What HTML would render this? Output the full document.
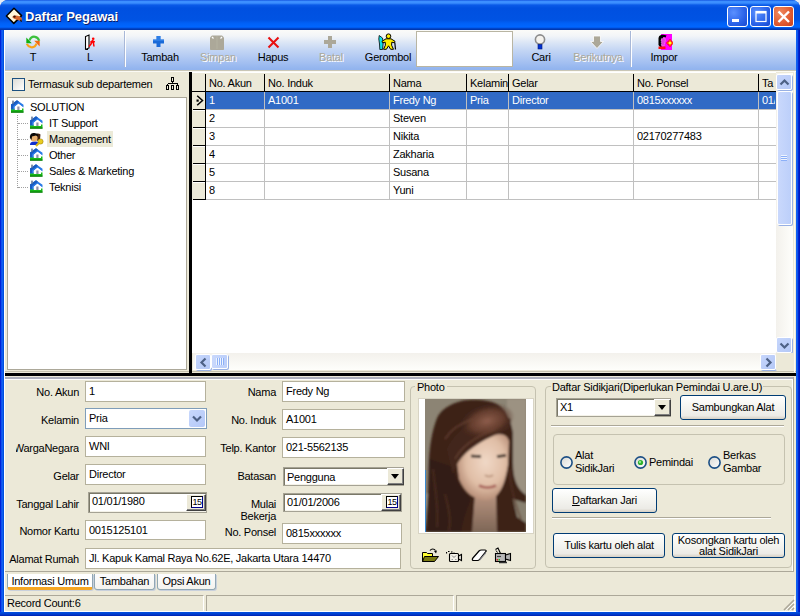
<!DOCTYPE html>
<html><head><meta charset="utf-8">
<style>
*{box-sizing:border-box}
html,body{margin:0;padding:0}
body{width:800px;height:616px;position:relative;overflow:hidden;background:#e6ecf6;font-family:"Liberation Sans",sans-serif;font-size:11px;letter-spacing:-0.25px;color:#000}
.a{position:absolute}
#frame{left:0;top:0;width:800px;height:616px;background:linear-gradient(90deg,#0018d0 0,#0030e0 1px,#2070ff 2px,#0050e0 3px,#0050e0 4px,#0050e0 796px,#2070ff 797px,#0038e0 798px,#0018c0 799px);border-radius:8px 8px 0 0}
#title{left:0;top:0;width:800px;height:30px;border-radius:8px 8px 0 0;background:linear-gradient(180deg,#0a46d8 0,#3c8fff 1px,#3c8fff 3px,#0a5ae8 5px,#0050e0 8px,#0053e3 20px,#0060f6 23px,#0066ff 27px,#0052e2 28px,#0038b0 29px,#0038b0 30px)}
#client{left:4px;top:30px;width:792px;height:582px;background:#ece9d8}
.ttl{left:25px;top:9px;color:#fff;font-weight:bold;font-size:13px;letter-spacing:0;text-shadow:1px 1px 0 #0a1e6a}
.wbtn{top:6px;width:21px;height:21px;border:1px solid #fff;border-radius:3px;background:radial-gradient(circle at 30% 30%,#5a90ff,#2a62e8 60%,#1848d0)}
.wbtn.x{background:radial-gradient(circle at 30% 30%,#f08a60,#e05a30 60%,#c8401c)}

.sep{top:31px;width:2px;height:36px;border-left:1px solid #a8b8d8;border-right:1px solid #fff}
.tb{top:51px;height:13px;text-align:center;font-size:11px;line-height:13px;white-space:nowrap}
.tb.dis{color:#aca899;text-shadow:1px 1px 0 #fff}

.tr{line-height:14px;white-space:nowrap}

.gh{line-height:14px;white-space:nowrap;overflow:hidden}
.gc{line-height:14px;white-space:nowrap}
.gc.sel{color:#fff}

.sbb{width:16px;height:16px;border:1px solid #fff;border-radius:2px;background:linear-gradient(135deg,#c6d6fc,#b4c8f6);box-shadow:1px 1px 0 #98b0e4}
.sbb svg{position:absolute;left:0;top:0}
.sbt{border:1px solid #fff;border-radius:2px;background:linear-gradient(90deg,#c9d8fc,#bccffa);box-shadow:1px 1px 0 #98b0e4}

.lbl{text-align:right;white-space:nowrap;line-height:13px}
.ed{background:#fff;border:1px solid #b5b19c;padding:0 0 0 3px;line-height:18px;white-space:nowrap;overflow:hidden}
.cbx{background:#fff;border:1px solid #7f9db9;padding:0 0 0 3px;line-height:18px}
.cbb{width:16px;height:17px;border-radius:2px;background:linear-gradient(135deg,#c8d8fc,#b4c8f8)}
.cbb svg{position:absolute;left:0;top:0}
.dt{background:#fff;border:1px solid #a5a294;box-shadow:inset 1px 1px 0 #7a7868,inset -1px -1px 0 #f4f2e8;padding:0 0 0 3px;line-height:17px;white-space:nowrap}
.dtb{background:#ece9d8;border-style:solid;border-width:1px;border-color:#fff #404040 #404040 #fff;box-shadow:inset -1px -1px 0 #808080}
.dtb span{position:absolute;left:4px;top:1px;width:12px;height:12px;font-size:9px;line-height:10px;letter-spacing:-0.4px;text-align:center;background:#fff;border-top:1px solid #000;border-left:1px solid #000;border-right:1px solid #00008a;border-bottom:1px solid #00008a;color:#000}
.tab{height:16px;line-height:14px;text-align:center;border:1px solid #91a7b4;border-top:none;border-radius:0 0 3px 3px;background:linear-gradient(180deg,#fcfcfe,#f4f3ee);white-space:nowrap;box-shadow:1px 1px 0 #c8d0dc}
.tab.sel{border-bottom:3px solid #f5a623;height:16px;background:#fff}
.sp{top:595px;height:16px;border-top:1px solid #aca899;border-left:1px solid #aca899;border-right:1px solid #fff}

.grp{border:1px solid #c5c2b0;border-radius:4px}
.hr{height:2px;border-top:1px solid #aca899;border-bottom:1px solid #fff}
.btn{border:1px solid #003c74;border-radius:3px;background:linear-gradient(180deg,#fff 0,#f6f6f2 40%,#ecebe6 85%,#d6d0c5 100%);text-align:center;line-height:23px;white-space:nowrap}
.rad{width:13px;height:13px;border-radius:50%;border:1.6px solid #1c4f85;background:linear-gradient(135deg,#dcdcd7,#fff)}
.rad.on::after{content:"";position:absolute;left:3px;top:3px;width:5px;height:5px;border-radius:50%;background:radial-gradient(circle at 40% 40%,#8be07a,#21a121)}
</style></head><body>
<div class="a" id="frame"></div>
<div class="a" id="title"></div>
<div class="a ttl">Daftar Pegawai</div>
<div class="a wbtn" style="left:727px"></div>
<div class="a wbtn" style="left:750px"></div>
<div class="a wbtn x" style="left:773px"></div>
<div class="a" id="client"></div>

<!-- TOOLBAR -->
<div class="a" style="left:4px;top:30px;width:792px;height:40px;background:linear-gradient(180deg,#fbfbf8 0,#f2f5f8 6px,#dde7f6 12px,#c4d6f4 20px,#aac4f2 30px,#92b4ee 39px)"></div>
<div class="a" style="left:4px;top:70px;width:792px;height:1px;background:#c9c6b6"></div>
<div class="a" style="left:4px;top:71px;width:792px;height:1px;background:#fbfaf4"></div>
<div class="a sep" style="left:124px"></div>
<div class="a sep" style="left:630px"></div>
<div class="a tb" style="left:20px;width:26px">T</div>
<div class="a tb" style="left:77px;width:26px">L</div>
<div class="a tb" style="left:139px;width:42px">Tambah</div>
<div class="a tb dis" style="left:197px;width:42px">Simpan</div>
<div class="a tb" style="left:252px;width:42px">Hapus</div>
<div class="a tb dis" style="left:310px;width:42px">Batal</div>
<div class="a tb" style="left:360px;width:56px">Gerombol</div>
<div class="a" style="left:416px;top:31px;width:97px;height:36px;background:#fff;border:1px solid #b9b5a2"></div>
<div class="a tb" style="left:525px;width:32px">Cari</div>
<div class="a tb dis" style="left:568px;width:60px">Berikutnya</div>
<div class="a tb" style="left:645px;width:38px">Impor</div>

<!-- LEFT PANEL -->
<div class="a" style="left:12px;top:78px;width:13px;height:13px;border:1px solid #1c5180;background:linear-gradient(135deg,#dcdcd7,#fff)"></div>
<div class="a" style="left:28px;top:78px;line-height:13px">Termasuk sub departemen</div>
<svg class="a" style="left:165px;top:76px" width="16" height="16" viewBox="0 0 16 16" shape-rendering="crispEdges"><g fill="none" stroke="#000" stroke-width="1"><rect x="6.5" y="1.5" width="2" height="4"/><path d="M7.5 5.5V7.5M2.5 7.5H12.5M2.5 7.5V9.5M12.5 7.5V9.5"/><rect x="1.5" y="9.5" width="2" height="4"/><rect x="6.5" y="9.5" width="2" height="4"/><rect x="11.5" y="9.5" width="2" height="4"/></g></svg>
<div class="a" style="left:7px;top:97px;width:180px;height:273px;background:#fff;border:1px solid #aca899"></div>
<div class="a" style="left:17px;top:115px;width:1px;height:73px;border-left:1px dotted #a0a0a0"></div>
<div class="a" style="left:18px;top:123px;width:10px;height:1px;border-top:1px dotted #a0a0a0"></div>
<div class="a" style="left:18px;top:139px;width:10px;height:1px;border-top:1px dotted #a0a0a0"></div>
<div class="a" style="left:18px;top:155px;width:10px;height:1px;border-top:1px dotted #a0a0a0"></div>
<div class="a" style="left:18px;top:171px;width:10px;height:1px;border-top:1px dotted #a0a0a0"></div>
<div class="a" style="left:18px;top:187px;width:10px;height:1px;border-top:1px dotted #a0a0a0"></div>
<div class="a" style="left:47px;top:131px;width:66px;height:16px;background:#ecead8"></div>
<div class="a tr" style="left:30px;top:100px">SOLUTION</div>
<div class="a tr" style="left:49px;top:116px">IT Support</div>
<div class="a tr" style="left:49px;top:132px">Management</div>
<div class="a tr" style="left:49px;top:148px">Other</div>
<div class="a tr" style="left:49px;top:164px">Sales &amp; Marketing</div>
<div class="a tr" style="left:49px;top:180px">Teknisi</div>

<!-- GRID -->
<div class="a" style="left:189px;top:72px;width:3px;height:301px;background:#000"></div>
<div class="a" style="left:192px;top:72px;width:584px;height:281px;background:#fff"></div>
<div class="a" style="left:192px;top:72px;width:584px;height:19px;background:#ece9d8;border-top:1px solid #fff"></div>
<div class="a" style="left:192px;top:91px;width:584px;height:1px;background:#000"></div>
<div class="a" style="left:192px;top:92px;width:13px;height:108px;background:#ece9d8"></div>
<div class="a" style="left:205px;top:74px;width:1px;height:126px;background:#000"></div>
<div class="a" style="left:206px;top:92px;width:570px;height:17px;background:#316ac5"></div>
<div class="a" style="left:206px;top:109px;width:570px;height:1px;background:#c0c0c0"></div>
<div class="a" style="left:193px;top:109px;width:13px;height:1px;background:#000"></div>
<div class="a" style="left:193px;top:110px;width:12px;height:1px;background:#fff"></div>
<div class="a" style="left:206px;top:127px;width:570px;height:1px;background:#c0c0c0"></div>
<div class="a" style="left:193px;top:127px;width:13px;height:1px;background:#000"></div>
<div class="a" style="left:193px;top:128px;width:12px;height:1px;background:#fff"></div>
<div class="a" style="left:206px;top:145px;width:570px;height:1px;background:#c0c0c0"></div>
<div class="a" style="left:193px;top:145px;width:13px;height:1px;background:#000"></div>
<div class="a" style="left:193px;top:146px;width:12px;height:1px;background:#fff"></div>
<div class="a" style="left:206px;top:163px;width:570px;height:1px;background:#c0c0c0"></div>
<div class="a" style="left:193px;top:163px;width:13px;height:1px;background:#000"></div>
<div class="a" style="left:193px;top:164px;width:12px;height:1px;background:#fff"></div>
<div class="a" style="left:206px;top:181px;width:570px;height:1px;background:#c0c0c0"></div>
<div class="a" style="left:193px;top:181px;width:13px;height:1px;background:#000"></div>
<div class="a" style="left:193px;top:182px;width:12px;height:1px;background:#fff"></div>
<div class="a" style="left:206px;top:199px;width:570px;height:1px;background:#c0c0c0"></div>
<div class="a" style="left:193px;top:199px;width:13px;height:1px;background:#000"></div>
<div class="a" style="left:193px;top:200px;width:12px;height:1px;background:#fff"></div>
<div class="a" style="left:264px;top:92px;width:1px;height:108px;background:#c0c0c0"></div>
<div class="a" style="left:264px;top:74px;width:1px;height:17px;background:#000"></div>
<div class="a" style="left:389px;top:92px;width:1px;height:108px;background:#c0c0c0"></div>
<div class="a" style="left:389px;top:74px;width:1px;height:17px;background:#000"></div>
<div class="a" style="left:466px;top:92px;width:1px;height:108px;background:#c0c0c0"></div>
<div class="a" style="left:466px;top:74px;width:1px;height:17px;background:#000"></div>
<div class="a" style="left:508px;top:92px;width:1px;height:108px;background:#c0c0c0"></div>
<div class="a" style="left:508px;top:74px;width:1px;height:17px;background:#000"></div>
<div class="a" style="left:633px;top:92px;width:1px;height:108px;background:#c0c0c0"></div>
<div class="a" style="left:633px;top:74px;width:1px;height:17px;background:#000"></div>
<div class="a" style="left:758px;top:92px;width:1px;height:108px;background:#c0c0c0"></div>
<div class="a" style="left:758px;top:74px;width:1px;height:17px;background:#000"></div>
<div class="a gh" style="left:209px;top:76px;width:55px;overflow:hidden">No. Akun</div>
<div class="a gh" style="left:268px;top:76px;width:121px;overflow:hidden">No. Induk</div>
<div class="a gh" style="left:393px;top:76px;width:73px;overflow:hidden">Nama</div>
<div class="a gh" style="left:470px;top:76px;width:38px;overflow:hidden">Kelamin</div>
<div class="a gh" style="left:512px;top:76px;width:121px;overflow:hidden">Gelar</div>
<div class="a gh" style="left:637px;top:76px;width:121px;overflow:hidden">No. Ponsel</div>
<div class="a gh" style="left:762px;top:76px;width:13px;overflow:hidden">Ta</div>
<div class="a gc sel" style="left:209px;top:93px;width:55px;overflow:hidden">1</div>
<div class="a gc sel" style="left:268px;top:93px;width:121px;overflow:hidden">A1001</div>
<div class="a gc sel" style="left:393px;top:93px;width:73px;overflow:hidden">Fredy Ng</div>
<div class="a gc sel" style="left:470px;top:93px;width:38px;overflow:hidden">Pria</div>
<div class="a gc sel" style="left:512px;top:93px;width:121px;overflow:hidden">Director</div>
<div class="a gc sel" style="left:637px;top:93px;width:121px;overflow:hidden">0815xxxxxx</div>
<div class="a gc sel" style="left:762px;top:93px;width:13px;overflow:hidden">01/</div>
<div class="a gc" style="left:209px;top:111px;width:55px;overflow:hidden">2</div>
<div class="a gc" style="left:393px;top:111px;width:73px;overflow:hidden">Steven</div>
<div class="a gc" style="left:209px;top:129px;width:55px;overflow:hidden">3</div>
<div class="a gc" style="left:393px;top:129px;width:73px;overflow:hidden">Nikita</div>
<div class="a gc" style="left:637px;top:129px;width:121px;overflow:hidden">02170277483</div>
<div class="a gc" style="left:209px;top:147px;width:55px;overflow:hidden">4</div>
<div class="a gc" style="left:393px;top:147px;width:73px;overflow:hidden">Zakharia</div>
<div class="a gc" style="left:209px;top:165px;width:55px;overflow:hidden">5</div>
<div class="a gc" style="left:393px;top:165px;width:73px;overflow:hidden">Susana</div>
<div class="a gc" style="left:209px;top:183px;width:55px;overflow:hidden">8</div>
<div class="a gc" style="left:393px;top:183px;width:73px;overflow:hidden">Yuni</div>
<svg class="a" style="left:196px;top:95px" width="8" height="11" viewBox="0 0 8 11"><path d="M1.2 0.8L6.5 5.5L1.2 10.2" fill="none" stroke="#000" stroke-width="1.5"/><rect x="0.5" y="4.5" width="2.2" height="2.2" fill="#000"/></svg>

<!-- SCROLLBARS -->
<div class="a" style="left:776px;top:73px;width:17px;height:280px;background:linear-gradient(90deg,#f3f1ec,#fefefb)"></div>
<div class="a sbb" style="left:776px;top:74px"><svg width="15" height="15" viewBox="0 0 15 15"><path d="M3.5 9.5L7.5 5.5L11.5 9.5" fill="none" stroke="#4d6185" stroke-width="2.2"/></svg></div>
<div class="a sbt" style="left:777px;top:91px;width:15px;height:134px"></div>
<div class="a" style="left:781px;top:155px;width:6px;height:1px;background:#eef4fe;box-shadow:0 1px 0 #8cb0f8"></div>
<div class="a" style="left:781px;top:157px;width:6px;height:1px;background:#eef4fe;box-shadow:0 1px 0 #8cb0f8"></div>
<div class="a" style="left:781px;top:159px;width:6px;height:1px;background:#eef4fe;box-shadow:0 1px 0 #8cb0f8"></div>
<div class="a sbb" style="left:776px;top:337px"><svg width="15" height="15" viewBox="0 0 15 15"><path d="M3.5 5.5L7.5 9.5L11.5 5.5" fill="none" stroke="#4d6185" stroke-width="2.2"/></svg></div>
<div class="a" style="left:193px;top:353px;width:583px;height:17px;background:linear-gradient(180deg,#f3f1ec,#fefefb)"></div>
<div class="a sbb" style="left:195px;top:354px"><svg width="15" height="15" viewBox="0 0 15 15"><path d="M9.5 3.5L5.5 7.5L9.5 11.5" fill="none" stroke="#4d6185" stroke-width="2.2"/></svg></div>
<div class="a sbt" style="left:211px;top:354px;width:17px;height:15px"></div>
<div class="a" style="left:216px;top:358px;width:1px;height:7px;background:#eef4fe;box-shadow:1px 0 0 #8cb0f8"></div>
<div class="a" style="left:218px;top:358px;width:1px;height:7px;background:#eef4fe;box-shadow:1px 0 0 #8cb0f8"></div>
<div class="a" style="left:220px;top:358px;width:1px;height:7px;background:#eef4fe;box-shadow:1px 0 0 #8cb0f8"></div>
<div class="a" style="left:222px;top:358px;width:1px;height:7px;background:#eef4fe;box-shadow:1px 0 0 #8cb0f8"></div>
<div class="a sbb" style="left:760px;top:354px"><svg width="15" height="15" viewBox="0 0 15 15"><path d="M5.5 3.5L9.5 7.5L5.5 11.5" fill="none" stroke="#4d6185" stroke-width="2.2"/></svg></div>
<div class="a" style="left:776px;top:353px;width:17px;height:17px;background:#ece9d8"></div>
<div class="a" style="left:4px;top:371px;width:185px;height:1px;background:#c4c0ac"></div>
<div class="a" style="left:192px;top:371px;width:604px;height:1px;background:#c4c0ac"></div>
<div class="a" style="left:4px;top:373px;width:792px;height:3px;background:#000"></div>
<div class="a" style="left:4px;top:377px;width:790px;height:2px;background:#aeb0bc"></div>
<div class="a" style="left:4px;top:379px;width:789px;height:1px;background:#fff"></div>
<div class="a" style="left:4px;top:379px;width:1px;height:192px;background:#fff"></div>
<div class="a" style="left:4px;top:571px;width:790px;height:1px;background:#aca899"></div>


<!-- FORM LEFT -->
<div class="a lbl" style="left:4px;width:75px;top:386px">No. Akun</div>
<div class="a lbl" style="left:4px;width:75px;top:414px">Kelamin</div>
<div class="a" style="left:16px;width:63px;top:442px;overflow:hidden;height:14px"><div class="a lbl" style="right:0;top:0">WargaNegara</div></div>
<div class="a lbl" style="left:4px;width:75px;top:470px">Gelar</div>
<div class="a lbl" style="left:4px;width:75px;top:498px">Tanggal Lahir</div>
<div class="a lbl" style="left:4px;width:75px;top:525px">Nomor Kartu</div>
<div class="a lbl" style="left:4px;width:75px;top:553px">Alamat Rumah</div>
<div class="a ed" style="left:85px;top:381px;width:121px;height:21px">1</div>
<div class="a cbx" style="left:85px;top:408px;width:122px;height:21px">Pria</div>
<div class="a cbb" style="left:189px;top:410px"><svg width="16" height="17" viewBox="0 0 16 17"><path d="M4 6.5L8 10.5L12 6.5" fill="none" stroke="#4d6185" stroke-width="2.2"/></svg></div>
<div class="a ed" style="left:85px;top:436px;width:121px;height:21px">WNI</div>
<div class="a ed" style="left:85px;top:464px;width:121px;height:21px">Director</div>
<div class="a dt" style="left:88px;top:492px;width:119px;height:21px">01/01/1980</div>
<div class="a dtb" style="left:186px;top:494px;width:20px;height:17px"><span>15</span></div>
<div class="a ed" style="left:85px;top:520px;width:121px;height:20px">0015125101</div>
<div class="a ed" style="left:85px;top:548px;width:316px;height:21px">Jl. Kapuk Kamal Raya No.62E, Jakarta Utara 14470</div>

<!-- FORM RIGHT -->
<div class="a lbl" style="left:200px;width:76px;top:386px">Nama</div>
<div class="a lbl" style="left:200px;width:76px;top:414px">No. Induk</div>
<div class="a lbl" style="left:200px;width:76px;top:442px">Telp. Kantor</div>
<div class="a lbl" style="left:200px;width:76px;top:470px">Batasan</div>
<div class="a lbl" style="left:200px;width:76px;top:498px">Mulai</div>
<div class="a lbl" style="left:200px;width:76px;top:510px">Bekerja</div>
<div class="a lbl" style="left:200px;width:76px;top:526px">No. Ponsel</div>
<div class="a ed" style="left:282px;top:381px;width:123px;height:21px">Fredy Ng</div>
<div class="a ed" style="left:282px;top:409px;width:123px;height:21px">A1001</div>
<div class="a ed" style="left:282px;top:437px;width:123px;height:21px">021-5562135</div>
<div class="a dt" style="left:283px;top:467px;width:121px;height:19px;line-height:18px">Pengguna</div>
<div class="a dtb" style="left:387px;top:468px;width:17px;height:17px"><svg style="position:absolute;left:3px;top:5px" width="9" height="6" viewBox="0 0 9 6"><path d="M0 0H8L4 5z" fill="#000"/></svg></div>
<div class="a dt" style="left:283px;top:493px;width:119px;height:19px;line-height:17px">01/01/2006</div>
<div class="a dtb" style="left:381px;top:494px;width:20px;height:17px"><span>15</span></div>
<div class="a ed" style="left:282px;top:523px;width:120px;height:21px">0815xxxxxx</div>

<!-- TABS -->
<div class="a tab sel" style="left:7px;top:574px;width:86px">Informasi Umum</div>
<div class="a tab" style="left:94px;top:574px;width:61px">Tambahan</div>
<div class="a tab" style="left:157px;top:574px;width:59px">Opsi Akun</div>

<!-- STATUS -->
<div class="a sp" style="left:4px;width:200px"></div>
<div class="a sp" style="left:206px;width:248px"></div>
<div class="a sp" style="left:456px;width:339px"></div>
<div class="a" style="left:7px;top:597px;line-height:13px">Record Count:6</div>
<div class="a" style="left:4px;top:611px;width:792px;height:1px;background:#fff"></div>


<!-- PHOTO GROUP -->
<div class="a grp" style="left:410px;top:386px;width:126px;height:183px"></div>
<div class="a" style="left:415px;top:381px;padding:0 2px;background:#ece9d8;line-height:13px">Photo</div>
<div class="a" style="left:418px;top:398px;width:116px;height:136px;background:#fff;border:1px solid #d8d4c4"></div>
<svg class="a" style="left:425px;top:399px" width="101" height="133" viewBox="0 0 101 133">
<defs>
<radialGradient id="face" cx="0.55" cy="0.42" r="0.62"><stop offset="0" stop-color="#f0d8c6"/><stop offset="0.6" stop-color="#e0bea6"/><stop offset="1" stop-color="#b08670"/></radialGradient>
<radialGradient id="hl" cx="0.5" cy="0.5" r="0.5"><stop offset="0" stop-color="#8e5e4c"/><stop offset="0.6" stop-color="#6a4030" stop-opacity="0.85"/><stop offset="1" stop-color="#48281e" stop-opacity="0"/></radialGradient>
<linearGradient id="neck" x1="0" y1="0" x2="0" y2="1"><stop offset="0" stop-color="#b89480"/><stop offset="1" stop-color="#7e6656"/></linearGradient>
<filter id="bl" x="-10%" y="-10%" width="120%" height="120%"><feGaussianBlur stdDeviation="1.1"/></filter>
</defs>
<rect width="101" height="133" fill="#8c8474"/>
<g filter="url(#bl)">
<rect x="82" y="0" width="19" height="100" fill="#9c9282"/>
<rect x="0" y="95" width="8" height="38" fill="#a49e90"/>

<path d="M0 133L3 92L4 60C5 45 7 32 12 19C16 11 24 5 38 1.6C48 0 62 0 72 5C80 10 86 20 88 34L88 64C88 80 92 90 101 96V133Z" fill="#3c2319"/>
<path d="M4 60C5 85 6 110 3 133H36C38 120 42 110 46 100C36 92 30 80 28 68Z" fill="#311c14"/>
<path d="M88 100L101 104V124L92 118Z" fill="#888070"/>
<path d="M50 95L71 95L72 133H47Z" fill="url(#neck)"/>
<path d="M32 64C33 48 45 40 60 37C74 34 82 34 84 42L83 66C80 85 75 98 64 101C52 103 40 95 34 80Z" fill="url(#face)"/>
<path d="M28 76C32 58 48 44 84 30L86 20C66 12 36 22 22 50Z" fill="#43271c"/>
<ellipse cx="62" cy="22" rx="28" ry="17" transform="rotate(-15 62 22)" fill="url(#hl)"/>
<path d="M20 40C26 30 36 24 48 20M30 60C36 48 50 38 70 30" stroke="#6e4636" stroke-width="1.5" fill="none" opacity="0.7"/>
<path d="M8 70C10 90 14 110 12 128M20 95C24 110 26 120 24 132M84 70C86 90 90 105 96 120" stroke="#5a3628" stroke-width="1.5" fill="none" opacity="0.7"/>
<path d="M46 57L56 57.5M72 57.5L81 56.5" stroke="#1e120c" stroke-width="2.4"/>
<path d="M60 76C62 78 66 78 68 76" stroke="#b08870" stroke-width="1.5" fill="none"/>
<path d="M54 86.5C59 89 66 89 71 86.5" stroke="#a8625a" stroke-width="2.6" fill="none"/>
</g>
</svg>
<div class="a" style="left:425px;top:470px;width:1px;height:62px;background:#3a8ad0"></div>
<svg class="a" style="left:420px;top:547px" width="20" height="16" viewBox="0 0 20 16">
<path d="M2.5 5.5H6.5L7.5 6.5H12.5V14.5H2.5Z" fill="#ffff30" stroke="#000" stroke-width="1"/>
<path d="M4.5 9.5H18.5L14.5 14.5H2.5Z" fill="#7a7a10" stroke="#000" stroke-width="1" stroke-linejoin="round"/>
<path d="M10 3.5C11.5 1.5 14 1.5 15.5 3.5" fill="none" stroke="#000" stroke-width="1.2"/>
<path d="M14 4L17 3.5L16 6.5Z" fill="#000"/>
</svg>
<svg class="a" style="left:446px;top:550px" width="17" height="13" viewBox="0 0 17 13">
<path d="M0.5 2V3.5M2 1.5H3.5M5 2H6.5M7.5 3H8.5" stroke="#000" stroke-width="1.2"/>
<rect x="3.5" y="3.5" width="9" height="8" rx="1" fill="#f4f2ea" stroke="#000" stroke-width="1.1"/>
<path d="M12.5 6L15.5 4.5V10.5L12.5 9Z" fill="#e0ded6" stroke="#000" stroke-width="1.1"/>
<path d="M6 5.5L8 7.5L10 5.5" stroke="#808080" fill="none"/>
<path d="M5.5 9.5H7M9 9.5H10.5" stroke="#a0a0a0"/>
</svg>
<svg class="a" style="left:471px;top:549px" width="17" height="13" viewBox="0 0 17 13">
<path d="M1.5 9.5L8 2C8.5 1.5 9.5 1 10.5 1H14C15 1 15.5 1.8 15 2.5L8.5 10.5C8 11.2 7.2 11.5 6.5 11.5H2.5C1.5 11.5 1 10.5 1.5 9.5Z" fill="#fff" stroke="#000" stroke-width="1.2"/>
<path d="M8.5 10.5L15 3V4.5L9 11.5Z" fill="#909098"/>
</svg>
<svg class="a" style="left:494px;top:547px" width="18" height="17" viewBox="0 0 18 17">
<path d="M1.5 2.5L4 1L6.5 6.5" fill="none" stroke="#000" stroke-width="1.1"/>
<path d="M2 3.5L3.5 5.5" stroke="#000"/>
<rect x="1.5" y="6.5" width="10" height="8" fill="#b8b8b8" stroke="#000" stroke-width="1.1"/>
<path d="M3 9.5H7" stroke="#404040" stroke-width="1.2"/>
<path d="M11.5 8L16.5 6.5V13.5L11.5 12Z" fill="#b0b0b0" stroke="#000" stroke-width="1.1"/>
<rect x="2.5" y="12" width="1.5" height="1.5" fill="#e02020"/><rect x="4.5" y="12" width="1.5" height="1.5" fill="#20c020"/>
<path d="M5 15.5H13" stroke="#303030" stroke-width="1.5"/>
</svg>

<!-- SIDIKJARI GROUP -->
<div class="a grp" style="left:545px;top:386px;width:247px;height:182px"></div>
<div class="a" style="left:551px;top:381px;padding:0 1px;background:#ece9d8;line-height:13px">Daftar Sidikjari(Diperlukan Pemindai U.are.U)</div>
<div class="a dt" style="left:556px;top:398px;width:115px;height:19px;line-height:17px">X1</div>
<div class="a dtb" style="left:654px;top:399px;width:17px;height:17px"><svg style="position:absolute;left:3px;top:5px" width="9" height="6" viewBox="0 0 9 6"><path d="M0 0H8L4 5z" fill="#000"/></svg></div>
<div class="a btn" style="left:680px;top:395px;width:106px;height:25px">Sambungkan Alat</div>
<div class="a hr" style="left:551px;top:425px;width:233px"></div>
<div class="a grp" style="left:553px;top:434px;width:232px;height:51px"></div>
<svg class="a" style="left:560px;top:456px" width="13" height="13" viewBox="0 0 13 13"><defs><linearGradient id="rg560" x1="0" y1="0" x2="1" y2="1"><stop offset="0" stop-color="#d8d8d2"/><stop offset="1" stop-color="#fff"/></linearGradient></defs><circle cx="6.5" cy="6.5" r="5.6" fill="url(#rg560)" stroke="#1c4f85" stroke-width="1.6"/></svg>
<svg class="a" style="left:634px;top:456px" width="13" height="13" viewBox="0 0 13 13"><defs><linearGradient id="rg634" x1="0" y1="0" x2="1" y2="1"><stop offset="0" stop-color="#d8d8d2"/><stop offset="1" stop-color="#fff"/></linearGradient></defs><circle cx="6.5" cy="6.5" r="5.6" fill="url(#rg634)" stroke="#1c4f85" stroke-width="1.6"/><circle cx="6.5" cy="6.5" r="2.6" fill="#2cb02c"/><circle cx="6" cy="6" r="1.2" fill="#8ee88e"/></svg>
<svg class="a" style="left:708px;top:456px" width="13" height="13" viewBox="0 0 13 13"><defs><linearGradient id="rg708" x1="0" y1="0" x2="1" y2="1"><stop offset="0" stop-color="#d8d8d2"/><stop offset="1" stop-color="#fff"/></linearGradient></defs><circle cx="6.5" cy="6.5" r="5.6" fill="url(#rg708)" stroke="#1c4f85" stroke-width="1.6"/></svg>
<div class="a" style="left:575px;top:449px;line-height:13px">Alat<br>SidikJari</div>
<div class="a" style="left:649px;top:456px;line-height:13px">Pemindai</div>
<div class="a" style="left:723px;top:449px;line-height:13px">Berkas<br>Gambar</div>
<div class="a btn" style="left:552px;top:488px;width:105px;height:25px"><u>D</u>aftarkan Jari</div>
<div class="a hr" style="left:552px;top:517px;width:219px"></div>
<div class="a btn" style="left:553px;top:533px;width:112px;height:25px">Tulis kartu oleh alat</div>
<div class="a btn" style="left:672px;top:533px;width:113px;height:25px;line-height:11px;padding-top:1px">Kosongkan kartu oleh<br>alat SidikJari</div>


<!-- ICONS -->
<svg class="a" style="left:5px;top:7px" width="18" height="18" viewBox="0 0 18 18"><path d="M9 1.3L16.6 8.6L8.8 16.4L1.4 9Z" fill="#fff8dc" stroke="#000" stroke-width="1.5" stroke-linejoin="round"/><path d="M7.5 9.5C9 8 12 8.5 15 9.5L17 11.5L16.5 14.5L13 13C10.5 12.5 8.5 11.5 7.5 10.5Z" fill="#d8682e"/><path d="M16 12L17 15L15 14Z" fill="#000"/><circle cx="9.5" cy="9.6" r="1.2" fill="#401808"/></svg>
<svg class="a" style="left:731px;top:13px" width="10" height="10" viewBox="0 0 10 10"><rect x="1" y="6" width="7" height="3" fill="#fff"/></svg>
<svg class="a" style="left:754px;top:10px" width="14" height="14" viewBox="0 0 14 14"><rect x="2" y="1.5" width="10" height="10" fill="none" stroke="#fff" stroke-width="1.2"/><rect x="2" y="1" width="10" height="2.5" fill="#fff"/></svg>
<svg class="a" style="left:776px;top:9px" width="16" height="16" viewBox="0 0 16 16"><path d="M2.5 2.5L13 13M13 2.5L2.5 13" stroke="#fff" stroke-width="2.4"/></svg>

<svg class="a" style="left:25px;top:34px" width="16" height="16" viewBox="0 0 16 16">
<path d="M4.5 6.5C5.5 3.5 8 2.5 10 2.8C12.2 3.2 13.6 4.8 14.2 6.8" fill="none" stroke="#3cc03c" stroke-width="2.2"/>
<path d="M1.3 3.6L1.3 9.2L6.8 9.2Z" fill="#10b010"/>
<path d="M11.5 9.5C10.5 12.5 8 13.5 6 13.2C3.8 12.8 2.4 11.2 1.8 9.9" fill="none" stroke="#f8a418" stroke-width="2.2"/>
<path d="M14.7 12.4L14.7 6.8L9.2 6.8Z" fill="#f46a10"/>
</svg>
<svg class="a" style="left:84px;top:34px" width="13" height="16" viewBox="0 0 13 16"><path d="M1.5 15.5V2.5L5 1V14L1.5 15.5" fill="#fff" stroke="#000" stroke-width="1.1"/><path d="M1.5 15.5H4" stroke="#000"/><circle cx="9.2" cy="4.8" r="1.3" fill="#f00"/><path d="M8.5 6.5L7 10L5 12.5M8.5 6.5L9.5 9.5L10 12.5M8.5 7L6.3 8.3M8.5 7L10.8 8" stroke="#f00" stroke-width="1.5" fill="none"/></svg>
<svg class="a" style="left:152px;top:35px" width="13" height="13" viewBox="0 0 13 13"><path d="M4.5 1H8.5V4.5H12V8.5H8.5V12H4.5V8.5H1V4.5H4.5Z" fill="#1a6ad8"/><path d="M4.5 1H8.5V4.5H4.5ZM1 4.5H12V6H1Z" fill="#3c8cf0" opacity="0.6"/></svg>
<svg class="a" style="left:209px;top:34px" width="16" height="17" viewBox="0 0 16 17"><path d="M3 1.5H13L15 3.5V15C15 15.6 14.6 16 14 16H2C1.4 16 1 15.6 1 15V3.5Z" fill="#aca899"/><path d="M3 3L4.5 4.5M13 3L11.5 4.5" stroke="#fff" stroke-width="1.2"/><path d="M8 2V15" stroke="#bcb8a8" stroke-width="0.6"/></svg>
<svg class="a" style="left:267px;top:36px" width="13" height="13" viewBox="0 0 13 13"><path d="M1.5 1.5L11.5 11.5M11.5 1.5L1.5 11.5" stroke="#e81010" stroke-width="2.1"/></svg>
<svg class="a" style="left:323px;top:35px" width="14" height="14" viewBox="0 0 14 14"><path d="M5 1H9V5H13V9H9V13H5V9H1V5H5Z" fill="#aca899"/></svg>
<svg class="a" style="left:378px;top:33px" width="19" height="18" viewBox="0 0 19 18">
<path d="M1.2 2.5L4.5 5L5.2 10L4.5 16.5H1.8L1.5 11L0.8 6Z" fill="#10e0e8" stroke="#000" stroke-width="0.8"/>
<circle cx="10.5" cy="3.2" r="2.3" fill="#ffee00" stroke="#000" stroke-width="1"/>
<path d="M8 5.8H13L17 8.3L16.5 9.8L13.8 9.2L13.6 12.2L15.5 16.3H12.6L10.5 12.8L8.4 16.3H5.5L7.4 12.2L7.2 9.2L4.5 9.8L4 8.3Z" fill="#ffee00" stroke="#000" stroke-width="1" stroke-linejoin="round"/>
<path d="M16.8 9.5L17.5 16.5" stroke="#000" stroke-width="1.2"/>
</svg>
<svg class="a" style="left:534px;top:33px" width="12" height="17" viewBox="0 0 12 17"><circle cx="6" cy="6.5" r="4.6" fill="#f4f2ee" stroke="#8c8c8c" stroke-width="1.6"/><rect x="4" y="11.5" width="4" height="4.5" fill="#0030d0" stroke="#001880" stroke-width="0.6"/></svg>
<svg class="a" style="left:590px;top:35px" width="14" height="15" viewBox="0 0 14 15"><path d="M3.5 1H10.5V6.5H13.5L7 13.5L0.5 6.5H3.5Z" fill="#aca899" stroke="#fff" stroke-width="0.8" stroke-linejoin="round"/></svg>
<svg class="a" style="left:657px;top:33px" width="16" height="18" viewBox="0 0 16 18">
<rect x="4" y="1" width="11" height="16" fill="#ff00ff"/>
<path d="M2 3.5C3 1.5 7 1.5 9.5 2.5L8.5 4.5L6.5 4L5.5 6L4.5 13.5L6 14.5L3.5 14.5L1.5 12L1.5 5Z" fill="#000"/>
<path d="M4 6L7.5 4.5L8.5 7L7 13L4.5 13Z" fill="#e040e0" stroke="#fff" stroke-width="0.5" stroke-dasharray="1 1"/>
<rect x="1.5" y="13.5" width="7" height="2.5" fill="#ff1010"/>
<path d="M10 9H12V7H14V9H16V11H14V13H12V11H10Z" fill="#ffff20" stroke="#ff0000" stroke-width="1"/>
</svg>

<!-- TREE ICONS -->
<svg class="a" style="left:11px;top:100px" width="13" height="13" viewBox="0 0 13 13"><rect x="0" y="8.5" width="12.5" height="4" fill="#18b818"/><rect x="0" y="11.5" width="12.5" height="1.2" fill="#0a7a0a"/><path d="M0 4.5L6 0.3L12.5 4.8V7.5L7.5 3.8L3.8 6.8V9.5H0Z" fill="#2a7ae6"/><path d="M0 4.5L6 0.3L8 1.7L2 6V9H0Z" fill="#1a5cc0"/><rect x="1.2" y="0.6" width="1.6" height="3" fill="#6a7a98"/><path d="M3.8 6.8L7.5 3.8L11 6.8V10H3.8Z" fill="#fff"/><rect x="6.3" y="6.5" width="2.2" height="3.5" fill="#9090a8"/></svg>
<svg class="a" style="left:30px;top:116px" width="13" height="13" viewBox="0 0 13 13"><rect x="0" y="8.5" width="12.5" height="4" fill="#18b818"/><rect x="0" y="11.5" width="12.5" height="1.2" fill="#0a7a0a"/><path d="M0 4.5L6 0.3L12.5 4.8V7.5L7.5 3.8L3.8 6.8V9.5H0Z" fill="#2a7ae6"/><path d="M0 4.5L6 0.3L8 1.7L2 6V9H0Z" fill="#1a5cc0"/><rect x="1.2" y="0.6" width="1.6" height="3" fill="#6a7a98"/><path d="M3.8 6.8L7.5 3.8L11 6.8V10H3.8Z" fill="#fff"/><rect x="6.3" y="6.5" width="2.2" height="3.5" fill="#9090a8"/></svg>
<svg class="a" style="left:30px;top:148px" width="13" height="13" viewBox="0 0 13 13"><rect x="0" y="8.5" width="12.5" height="4" fill="#18b818"/><rect x="0" y="11.5" width="12.5" height="1.2" fill="#0a7a0a"/><path d="M0 4.5L6 0.3L12.5 4.8V7.5L7.5 3.8L3.8 6.8V9.5H0Z" fill="#2a7ae6"/><path d="M0 4.5L6 0.3L8 1.7L2 6V9H0Z" fill="#1a5cc0"/><rect x="1.2" y="0.6" width="1.6" height="3" fill="#6a7a98"/><path d="M3.8 6.8L7.5 3.8L11 6.8V10H3.8Z" fill="#fff"/><rect x="6.3" y="6.5" width="2.2" height="3.5" fill="#9090a8"/></svg>
<svg class="a" style="left:30px;top:164px" width="13" height="13" viewBox="0 0 13 13"><rect x="0" y="8.5" width="12.5" height="4" fill="#18b818"/><rect x="0" y="11.5" width="12.5" height="1.2" fill="#0a7a0a"/><path d="M0 4.5L6 0.3L12.5 4.8V7.5L7.5 3.8L3.8 6.8V9.5H0Z" fill="#2a7ae6"/><path d="M0 4.5L6 0.3L8 1.7L2 6V9H0Z" fill="#1a5cc0"/><rect x="1.2" y="0.6" width="1.6" height="3" fill="#6a7a98"/><path d="M3.8 6.8L7.5 3.8L11 6.8V10H3.8Z" fill="#fff"/><rect x="6.3" y="6.5" width="2.2" height="3.5" fill="#9090a8"/></svg>
<svg class="a" style="left:30px;top:180px" width="13" height="13" viewBox="0 0 13 13"><rect x="0" y="8.5" width="12.5" height="4" fill="#18b818"/><rect x="0" y="11.5" width="12.5" height="1.2" fill="#0a7a0a"/><path d="M0 4.5L6 0.3L12.5 4.8V7.5L7.5 3.8L3.8 6.8V9.5H0Z" fill="#2a7ae6"/><path d="M0 4.5L6 0.3L8 1.7L2 6V9H0Z" fill="#1a5cc0"/><rect x="1.2" y="0.6" width="1.6" height="3" fill="#6a7a98"/><path d="M3.8 6.8L7.5 3.8L11 6.8V10H3.8Z" fill="#fff"/><rect x="6.3" y="6.5" width="2.2" height="3.5" fill="#9090a8"/></svg>
<svg class="a" style="left:27px;top:131px" width="17" height="16" viewBox="0 0 17 16"><path d="M3 14C3 11 5 10.5 8 10.5C10 10.5 11 11 11.5 12L10 14Z" fill="#1030d0"/><path d="M8 4C9 2 12 2 13.5 3.5L13 8L10 10Z" fill="#402010"/><circle cx="7" cy="7" r="3.6" fill="#e8b070"/><path d="M3 7C2.5 3 5 1.8 7.5 2C10.5 2.2 11.5 4 11 5.5L9 4.5L5 5.5L4.5 9Z" fill="#080808"/><circle cx="13.5" cy="10.5" r="2.6" fill="#e8cc20" stroke="#a08000" stroke-width="0.6"/><path d="M12 12L9 15" stroke="#d8b818" stroke-width="2.2"/></svg>


<!-- EDGE LINES -->
<div class="a" style="left:4px;top:30px;width:1px;height:582px;background:#fff"></div>
<div class="a" style="left:792px;top:379px;width:1px;height:192px;background:#fff"></div>
<div class="a" style="left:793px;top:377px;width:1px;height:195px;background:#aca899"></div>
<div class="a" style="left:794px;top:71px;width:1px;height:301px;background:#fbfaf4"></div>
<svg class="a" style="left:782px;top:598px" width="13" height="13" viewBox="0 0 13 13"><path d="M12 2L2 12M12 6L6 12M12 10L10 12" stroke="#aca899" stroke-width="1.6"/><path d="M12.5 3.5L3.5 12.5M12.5 7.5L7.5 12.5" stroke="#fff" stroke-width="0.8"/></svg>
<!-- bottom border -->
<div class="a" style="left:0;top:612px;width:800px;height:4px;background:linear-gradient(180deg,#0050e0,#0040d0 2px,#0020b0 4px)"></div>
</body></html>
